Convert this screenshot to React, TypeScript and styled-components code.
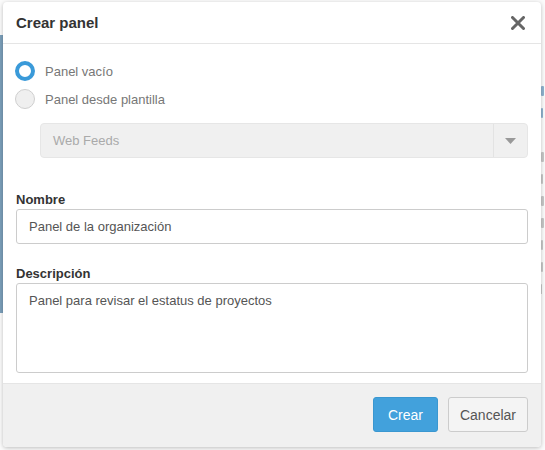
import React from 'react';
import styled, { createGlobalStyle } from 'styled-components';

const GlobalStyle = createGlobalStyle`
  html, body {
    margin: 0;
    padding: 0;
    background: #fbfbfb;
    font-family: "Liberation Sans", Arial, sans-serif;
  }
  * { box-sizing: border-box; }
`;

// fragments of the page behind the dialog, only slivers show at the right edge
const peek = [
  { blue: true, w: 3 },
  { blue: true, w: 2 },
  { blue: false, w: 0 },
  { blue: false, w: 3 },
  { blue: false, w: 2 },
  { blue: false, w: 3 },
  { blue: false, w: 3 },
  { blue: false, w: 2 },
  { blue: false, w: 2 },
  { blue: false, w: 1 },
];

const App: React.FC = () => {
  return (
    <>
      <GlobalStyle />
      <Page>
        <Backdrop>
          <SideBar />
          <Spacer />
          <PeekColumn>
            {peek.map((p, i) => (
              <PeekMark key={i} $blue={p.blue} style={{ width: p.w }} />
            ))}
          </PeekColumn>
        </Backdrop>

        <Modal>
          <Header>
            <Title>Crear panel</Title>
            <CloseButton aria-label="Cerrar">
              <svg width="14" height="14" viewBox="0 0 14 14">
                <path d="M1.5 1.5 L12.5 12.5 M12.5 1.5 L1.5 12.5" stroke="#666" strokeWidth="3" strokeLinecap="round" />
              </svg>
            </CloseButton>
          </Header>

          <Body>
            <RadioRow>
              <Radio $checked />
              <RadioLabel>Panel vacío</RadioLabel>
            </RadioRow>
            <RadioRow>
              <Radio />
              <RadioLabel>Panel desde plantilla</RadioLabel>
            </RadioRow>

            <Select>
              <SelectValue>Web Feeds</SelectValue>
              <SelectArrow>
                <svg width="11" height="6" viewBox="0 0 11 6">
                  <path d="M0 0 L11 0 L5.5 6 Z" fill="#999" />
                </svg>
              </SelectArrow>
            </Select>

            <Field $first>
              <Label>Nombre</Label>
              <Input>Panel de la organización</Input>
            </Field>

            <Field>
              <Label>Descripción</Label>
              <TextArea>Panel para revisar el estatus de proyectos</TextArea>
            </Field>
          </Body>

          <Footer>
            <Button $primary>Crear</Button>
            <Button>Cancelar</Button>
          </Footer>
        </Modal>
      </Page>
    </>
  );
};

export default App;

const Page = styled.div`
  position: relative;
  width: 545px;
  height: 450px;
  overflow: hidden;
`;

const Backdrop = styled.div`
  display: flex;
  height: 100%;
`;

const SideBar = styled.div`
  width: 3px;
  margin-top: 35px;
  height: 278px;
  background: #7b9fba;
`;

const Spacer = styled.div`
  flex: 1;
`;

const PeekColumn = styled.div`
  width: 4px;
  padding-top: 86px;
  display: flex;
  flex-direction: column;
  gap: 12px;
`;

const PeekMark = styled.span<{ $blue?: boolean }>`
  display: block;
  height: 10px;
  border-radius: 1px;
  background: ${(p) => (p.$blue ? '#8fb3cf' : '#c8c8c8')};
`;

const Modal = styled.div`
  position: absolute;
  top: 2px;
  left: 3px;
  width: 538px;
  height: 445px;
  background: #fff;
  border-radius: 4px;
  box-shadow: 0 1px 4px rgba(0, 0, 0, 0.25);
  display: flex;
  flex-direction: column;
  overflow: hidden;
`;

const Header = styled.div`
  height: 42px;
  padding: 0 16px 0 13px;
  display: flex;
  align-items: center;
  justify-content: space-between;
  border-bottom: 1px solid #e5e5e5;
`;

const Title = styled.h3`
  margin: 0;
  font-size: 15px;
  font-weight: bold;
  color: #333;
`;

const CloseButton = styled.button`
  border: 0;
  background: none;
  padding: 0;
  display: flex;
  cursor: pointer;
`;

const Body = styled.div`
  flex: 1;
  padding: 13px 13px 0 12px;
`;

const RadioRow = styled.label`
  display: flex;
  align-items: center;
  height: 28px;
  gap: 10px;
`;

const Radio = styled.span<{ $checked?: boolean }>`
  width: 20px;
  height: 20px;
  border-radius: 50%;
  background: ${(p) => (p.$checked ? '#fff' : '#efefef')};
  border: ${(p) => (p.$checked ? '4px solid #3a9ad9' : '1px solid #cfcfcf')};
`;

const RadioLabel = styled.span`
  font-size: 13px;
  color: #777;
`;

const Select = styled.div`
  margin: 10px 0 0 25px;
  height: 35px;
  display: flex;
  align-items: stretch;
  background: #f0f0f0;
  border: 1px solid #e6e6e6;
  border-radius: 4px;
`;

const SelectValue = styled.div`
  flex: 1;
  display: flex;
  align-items: center;
  padding-left: 12px;
  font-size: 13px;
  color: #aaa;
`;

const SelectArrow = styled.div`
  width: 34px;
  display: flex;
  align-items: center;
  justify-content: center;
  border-left: 1px solid #e3e3e3;
`;

const Field = styled.div<{ $first?: boolean }>`
  margin-top: ${(p) => (p.$first ? '33px' : '21px')};
  padding-left: 1px;
`;

const Label = styled.div`
  font-size: 13px;
  line-height: 18px;
  font-weight: bold;
  color: #333;
`;

const Input = styled.div`
  height: 35px;
  display: flex;
  align-items: center;
  padding: 0 12px;
  border: 1px solid #ccc;
  border-radius: 3px;
  font-size: 13px;
  color: #555;
`;

const TextArea = styled.div`
  height: 90px;
  padding: 9px 12px;
  border: 1px solid #ccc;
  border-radius: 3px;
  font-size: 13px;
  color: #555;
`;

const Footer = styled.div`
  height: 64px;
  border-top: 1px solid #e5e5e5;
  background: #f0f0f0;
  display: flex;
  justify-content: flex-end;
  align-items: flex-start;
  gap: 10px;
  padding: 13px 13px 0;
`;

const Button = styled.button<{ $primary?: boolean }>`
  height: 35px;
  padding: 0 ${(p) => (p.$primary ? '14px' : '11px')};
  border-radius: 3px;
  font-family: inherit;
  font-size: 14px;
  cursor: pointer;
  background: ${(p) => (p.$primary ? '#42a1dc' : '#f4f4f4')};
  color: ${(p) => (p.$primary ? '#fff' : '#555')};
  border: 1px solid ${(p) => (p.$primary ? '#3a97d0' : '#ccc')};
`;
